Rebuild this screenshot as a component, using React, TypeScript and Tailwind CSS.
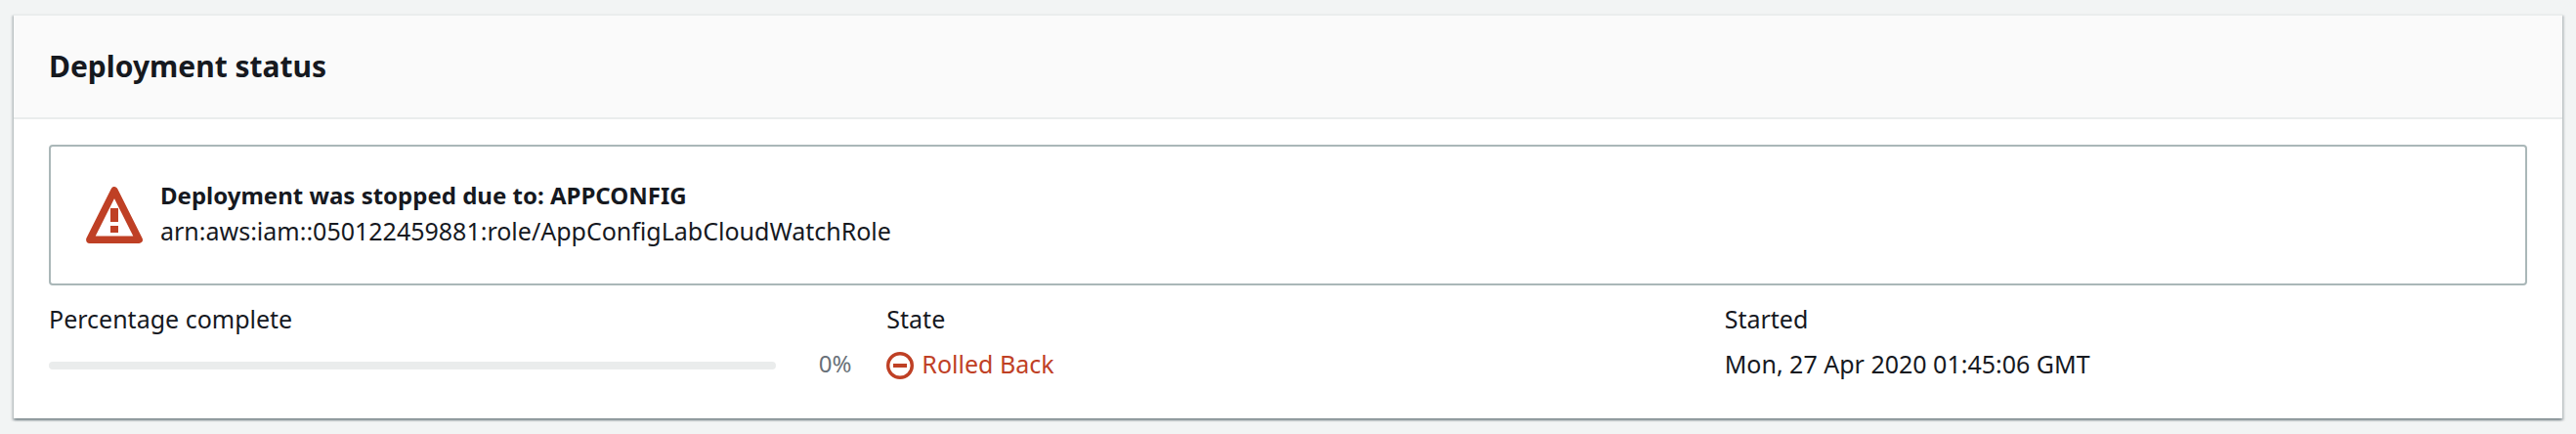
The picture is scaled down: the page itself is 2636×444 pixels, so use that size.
import type { ReactNode } from "react";

function WarningIcon() {
  return (
    <svg viewBox="0 0 58 58" className="mt-1 size-[58px] shrink-0" fill="none" aria-hidden="true">
      <path d="M29 3.8 54.2 54.2H3.8Z" stroke="#bf4025" strokeWidth="7.4" strokeLinejoin="round" />
      <path d="M25 22h8v14h-8zM25 40h8v7h-8z" fill="#bf4025" />
    </svg>
  );
}

function StoppedIcon() {
  return (
    <svg viewBox="0 0 28 28" className="mt-1 size-7 shrink-0" fill="none" stroke="currentColor" aria-hidden="true">
      <circle cx="14" cy="14" r="12.3" strokeWidth="3.4" />
      <path d="M7 14h14" strokeWidth="4" />
    </svg>
  );
}

function Field({ label, children }: { label: string; children: ReactNode }) {
  return (
    <div className="flex flex-col gap-2.5">
      <dt>{label}</dt>
      <dd>{children}</dd>
    </div>
  );
}

function Progress({ value }: { value: number }) {
  return (
    <div className="flex items-center">
      <div
        role="progressbar"
        aria-label="Percentage complete"
        aria-valuenow={value}
        aria-valuemin={0}
        aria-valuemax={100}
        className="mt-1 h-2 grow overflow-hidden rounded bg-[#eaecec]"
      >
        <div className="h-full bg-[#0073bb]" style={{ width: `${value}%` }} />
      </div>
      <span className="w-[77px] text-right text-[24px] leading-9 text-[#687078]">{value}%</span>
    </div>
  );
}

export default function App() {
  return (
    <main className="min-h-screen bg-[#f2f4f4] px-3.5 pt-3.5 pb-4 font-['Noto_Sans',sans-serif] text-[25px] leading-9 text-[#16191f]">
      <section className="border-t-2 border-[#eaeded] bg-white shadow-[0_2px_2px_0_rgba(0,28,36,0.3),2px_2px_2px_0_rgba(0,28,36,0.15),-2px_2px_2px_0_rgba(0,28,36,0.15)]">
        <header className="border-b-2 border-[#eaeded] bg-[#fafafa] px-9 py-8">
          <h2 className="text-[30px] leading-10 font-bold">Deployment status</h2>
        </header>
        <div className="flex flex-col gap-4 px-9 pt-[26px] pb-[38px]">
          <div role="alert" className="flex items-center gap-[18px] rounded-sm border-2 border-[#aab7b8] px-9 pt-8 pb-9">
            <WarningIcon />
            <div>
              <p className="text-[24px] leading-9 font-bold">Deployment was stopped due to: APPCONFIG</p>
              <p>arn:aws:iam::050122459881:role/AppConfigLabCloudWatchRole</p>
            </div>
          </div>
          <dl className="grid grid-cols-3 gap-9">
            <Field label="Percentage complete">
              <Progress value={0} />
            </Field>
            <Field label="State">
              <span className="flex items-center gap-2 text-[#bf4025]">
                <StoppedIcon />
                Rolled Back
              </span>
            </Field>
            <Field label="Started">Mon, 27 Apr 2020 01:45:06 GMT</Field>
          </dl>
        </div>
      </section>
    </main>
  );
}
